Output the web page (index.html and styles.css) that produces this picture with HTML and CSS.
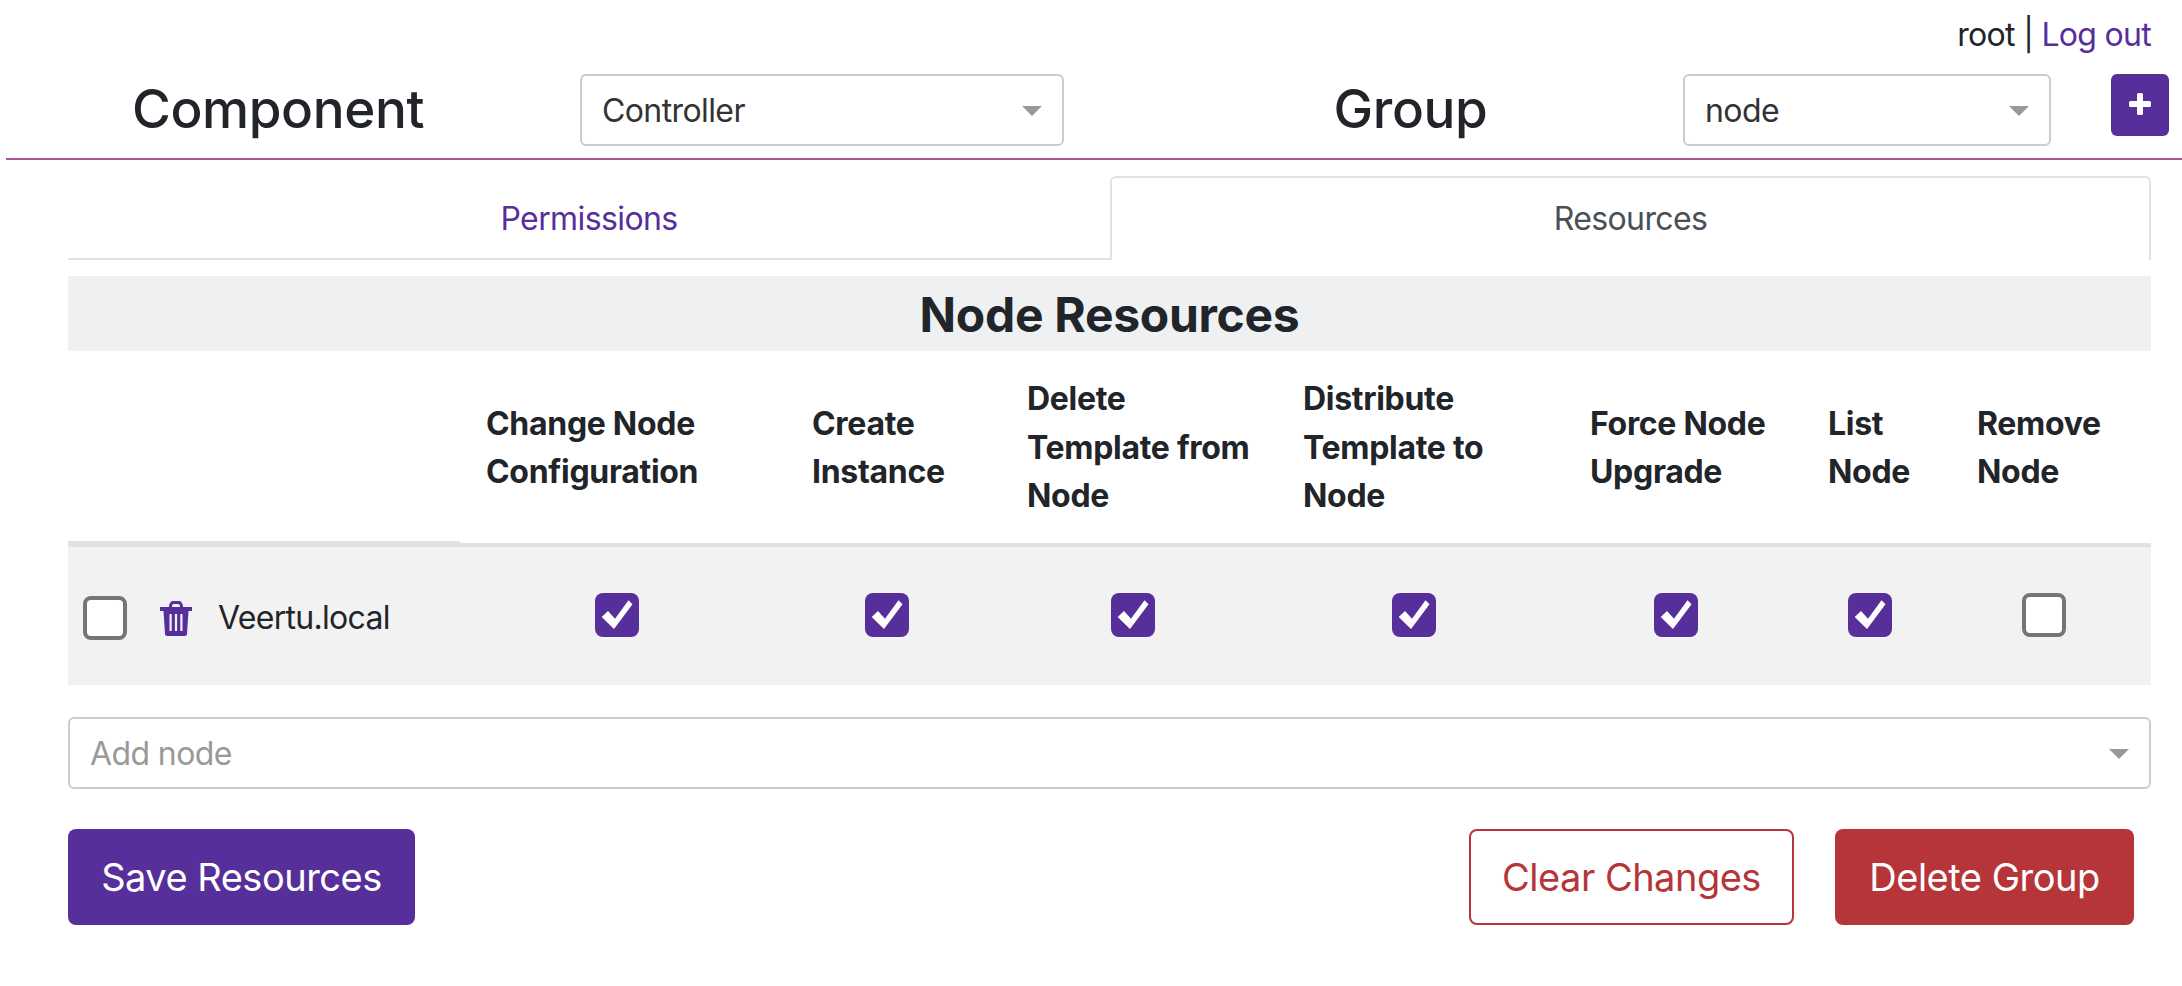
FILE: index.html
```html
<!DOCTYPE html>
<html lang="en">
<head>
<meta charset="utf-8">
<title>Node Resources</title>
<link rel="stylesheet" href="styles.css">
</head>
<body>
<div class="userbar">root | <a class="link" href="#">Log out</a></div>
<header class="topbar">
  <h2 class="label label-first">Component</h2>
  <div class="select select-component"><span>Controller</span><i class="arrow"></i></div>
  <h2 class="label label-second">Group</h2>
  <div class="select select-group"><span>node</span><i class="arrow"></i></div>
  <button class="plus" type="button" aria-label="Add group">
    <svg viewBox="0 0 22 22" width="22" height="22"><path d="M8 1.5A1.5 1.5 0 0 1 9.5 0h3A1.5 1.5 0 0 1 14 1.5V8h6.5A1.5 1.5 0 0 1 22 9.500v3a1.500 1.500 0 0 1-1.500 1.500H14v6.500a1.500 1.500 0 0 1-1.500 1.500h-3A1.500 1.500 0 0 1 8 20.500V14H1.500A1.500 1.500 0 0 1 0 12.500v-3A1.500 1.500 0 0 1 1.500 8H8z" fill="#fff"/></svg>
  </button>
</header>
<main class="content">
  <nav class="tabs">
    <a class="tab" href="#">Permissions</a>
    <a class="tab tab-active" href="#">Resources</a>
  </nav>
  <h3 class="section-title">Node Resources</h3>
  <table class="grid">
    <colgroup>
      <col class="c0"><col class="c1"><col class="c2"><col class="c3"><col class="c4"><col class="c5"><col class="c6"><col class="c7">
    </colgroup>
    <thead>
      <tr>
        <th class="corner"></th>
        <th>Change Node<br>Configuration</th>
        <th>Create<br>Instance</th>
        <th>Delete<br>Template from<br>Node</th>
        <th>Distribute<br>Template to<br>Node</th>
        <th>Force Node<br>Upgrade</th>
        <th>List<br>Node</th>
        <th>Remove<br>Node</th>
      </tr>
    </thead>
    <tbody>
      <tr>
        <td class="name-cell">
          <div class="name-wrap">
            <span class="box"></span>
            <svg class="trash" viewBox="0 0 32 35" width="32" height="35"><path fill-rule="evenodd" d="M9 6C9 2.500 11 0 13 0h6C21 0 23 2.500 23 6h-3c0-2-.5-3-2-3h-4C12.500 3 12 4 12 6zM0 6h32v4H0zM3.500 10h25L27 32.500A2.500 2.500 0 0 1 24.500 35h-17A2.500 2.500 0 0 1 5 32.500zM9.500 13v17h2.200V13zM14.900 13v17h2.200V13zM20.300 13v17h2.200V13z" fill="#572f9a"/></svg>
            <span class="name">Veertu.local</span>
          </div>
        </td>
        <td><span class="box on"><svg viewBox="0 0 44 44" width="44" height="44"><path d="M6.700 24 13 18l7 7.700L33.500 7.300l4 4L19 36z" fill="#fff"/></svg></span></td>
        <td><span class="box on"><svg viewBox="0 0 44 44" width="44" height="44"><path d="M6.700 24 13 18l7 7.700L33.500 7.300l4 4L19 36z" fill="#fff"/></svg></span></td>
        <td><span class="box on"><svg viewBox="0 0 44 44" width="44" height="44"><path d="M6.700 24 13 18l7 7.700L33.500 7.300l4 4L19 36z" fill="#fff"/></svg></span></td>
        <td><span class="box on"><svg viewBox="0 0 44 44" width="44" height="44"><path d="M6.700 24 13 18l7 7.700L33.500 7.300l4 4L19 36z" fill="#fff"/></svg></span></td>
        <td class="nudge"><span class="box on"><svg viewBox="0 0 44 44" width="44" height="44"><path d="M6.700 24 13 18l7 7.700L33.500 7.300l4 4L19 36z" fill="#fff"/></svg></span></td>
        <td><span class="box on"><svg viewBox="0 0 44 44" width="44" height="44"><path d="M6.700 24 13 18l7 7.700L33.500 7.300l4 4L19 36z" fill="#fff"/></svg></span></td>
        <td class="nudge"><span class="box"></span></td>
      </tr>
    </tbody>
  </table>
  <div class="select select-add"><span class="placeholder">Add node</span><i class="arrow"></i></div>
  <div class="actions">
    <button class="btn btn-primary" type="button">Save Resources</button>
    <button class="btn btn-outline" type="button">Clear Changes</button>
    <button class="btn btn-danger" type="button">Delete Group</button>
  </div>
</main>
</body>
</html>
```
FILE: styles.css
```css
* { box-sizing: border-box; }
html, body { margin: 0; padding: 0; }
body {
  font-family: Inter, "Liberation Sans", sans-serif;
  font-size: 32px;
  letter-spacing: -0.6px;
  color: #212529;
  background: #fff;
  height: 986px;
  overflow: hidden;
}
.link { color: #572f9a; text-decoration: none; }

.userbar {
  height: 74px;
  padding: 17px 31px 0 0;
  text-align: right;
  line-height: 36px;
  letter-spacing: -0.7px;
}

.topbar {
  display: flex;
  align-items: flex-start;
  height: 86px;
  margin-left: 6px;
  padding-right: 13px;
  border-bottom: 2px solid #ab5497;
}
.label {
  margin: 0;
  font-size: 53px;
  font-weight: 500;
  letter-spacing: -0.4px;
  line-height: 70px;
  text-align: center;
  flex: none;
}
.label-first { width: 574px; padding-right: 30px; }
.label-second { width: 619px; padding-left: 74px; }

.select {
  position: relative;
  display: flex;
  align-items: center;
  flex: none;
  height: 72px;
  padding-left: 20px;
  border: 2px solid #ccc;
  border-radius: 6px;
  background: #fff;
  color: #333;
}
.select-component { width: 484px; }
.select-group { width: 368px; }
.select-add { width: 100%; margin-top: 32px; }
.placeholder { color: #999; }
.arrow {
  position: absolute;
  top: 50%;
  right: 20px;
  margin-top: -4px;
  border-style: solid;
  border-width: 10px 10px 0;
  border-color: #999 transparent transparent;
}

.plus {
  flex: none;
  display: flex;
  justify-content: center;
  padding: 19px 0 0;
  width: 58px;
  height: 62px;
  margin-left: 60px;
  border: 0;
  border-radius: 6px;
  background: #572f9a;
}

.content { width: 2083px; margin-left: 68px; }

.tabs {
  display: flex;
  height: 100px;
  padding-top: 16px;
  border-bottom: 2px solid #dee2e6;
}
.tab {
  flex: 1 1 0;
  height: 84px;
  line-height: 84px;
  padding-top: 1px;
  text-align: center;
  color: #572f9a;
  text-decoration: none;
}
.tab-active {
  flex: none;
  width: 1041px;
  height: 84px;
  line-height: 82px;
  padding-top: 0;
  color: #495057;
  background: #fff;
  border: 2px solid #dee2e6;
  border-bottom: 0;
  border-radius: 6px 6px 0 0;
}

.section-title {
  margin: 16px 0 0;
  height: 75px;
  line-height: 77px;
  text-align: center;
  font-size: 48px;
  font-weight: 700;
  letter-spacing: -0.3px;
  background: #eff0f2;
}

.grid {
  width: 100%;
  table-layout: fixed;
  border-collapse: separate;
  border-spacing: 0;
}
.c0 { width: 392px; }
.c1 { width: 326px; }
.c2 { width: 215px; }
.c3 { width: 276px; }
.c4 { width: 287px; }
.c5 { width: 238px; }
.c6 { width: 149px; }
.c7 { width: 200px; }

.grid th {
  height: 196px;
  padding: 2px 0 0 26px;
  text-align: left;
  vertical-align: middle;
  font-size: 32px;
  font-weight: 700;
  letter-spacing: -0.3px;
  line-height: 48.500px;
  border-bottom: 4px solid #dee2e6;
}
.grid th.corner { border-bottom-width: 6px; }
.grid td {
  height: 138px;
  padding: 0 13px 3px 0;
  text-align: center;
  vertical-align: middle;
  background: #f2f2f2;
  line-height: 0;
}
.grid td.nudge { padding-right: 15px; }
.grid td.name-cell { padding: 0 0 0 15px; text-align: left; }
.name-wrap { display: flex; align-items: center; height: 44px; margin-top: 4px; }
.name { margin-left: 26px; line-height: 36px; letter-spacing: -0.7px; }
.trash { margin-left: 33px; flex: none; }

.box {
  display: inline-block;
  flex: none;
  width: 44px;
  height: 44px;
  border: 4px solid #757575;
  border-radius: 8px;
  background: #fff;
  vertical-align: top;
}
.box.on {
  border: 0;
  background: #572f9a;
}
.box svg { display: block; }

.actions {
  display: flex;
  margin-top: 40px;
  padding-right: 17px;
}
.btn {
  height: 96px;
  border-radius: 8px;
  font-family: inherit;
  font-size: 38px;
  letter-spacing: -0.5px;
  border: 2px solid transparent;
}
.btn-primary { width: 347px; margin-right: auto; background: #572f9a; color: #fff; }
.btn-outline { width: 325px; margin-right: 41px; background: #fff; border-color: #b53539; color: #b53539; }
.btn-danger { width: 299px; background: #b53539; color: #fff; }
```
